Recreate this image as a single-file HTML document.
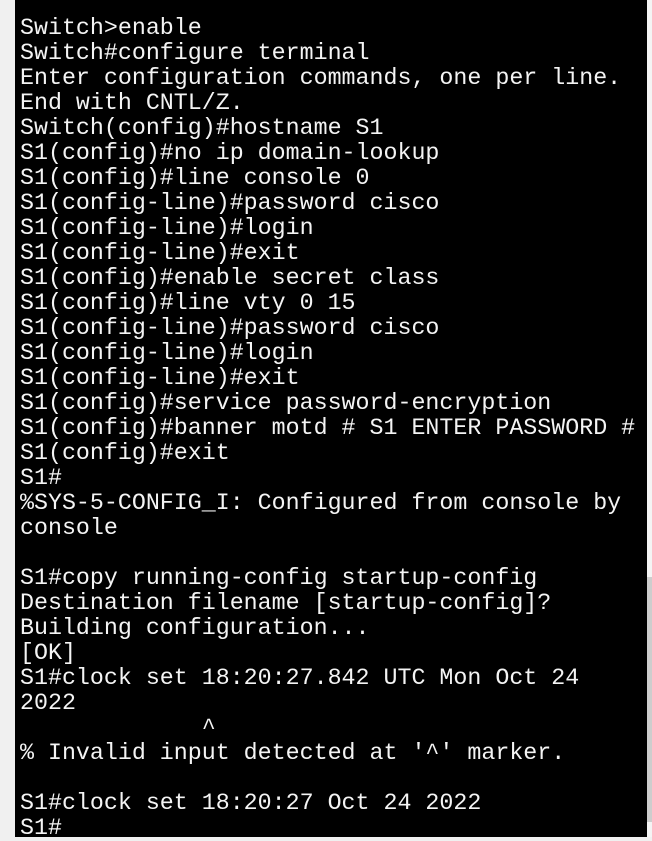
<!DOCTYPE html>
<html><head><style>
html,body{margin:0;padding:0;width:652px;height:837px;overflow:hidden;background:#f0f0f0;}
#t{position:absolute;left:15px;top:0;width:632px;height:837px;background:#000;}
#sb{position:absolute;left:647px;top:0;width:5px;height:837px;background:#f4f4f4;}
#sbt{position:absolute;left:647px;top:577px;width:5px;height:245px;background:#cdcdcd;}
pre{position:absolute;left:20px;top:16px;margin:0;font-family:"Courier New","Liberation Mono",monospace;font-size:23.3px;line-height:25px;color:#f4f4f4;}
</style></head><body>
<div id="t"></div><div id="sb"></div><div id="sbt"></div>
<pre>Switch&gt;enable
Switch#configure terminal
Enter configuration commands, one per line.
End with CNTL/Z.
Switch(config)#hostname S1
S1(config)#no ip domain-lookup
S1(config)#line console 0
S1(config-line)#password cisco
S1(config-line)#login
S1(config-line)#exit
S1(config)#enable secret class
S1(config)#line vty 0 15
S1(config-line)#password cisco
S1(config-line)#login
S1(config-line)#exit
S1(config)#service password-encryption
S1(config)#banner motd # S1 ENTER PASSWORD #
S1(config)#exit
S1#
%SYS-5-CONFIG_I: Configured from console by
console

S1#copy running-config startup-config
Destination filename [startup-config]?
Building configuration...
[OK]
S1#clock set 18:20:27.842 UTC Mon Oct 24
2022
             ^
% Invalid input detected at '^' marker.

S1#clock set 18:20:27 Oct 24 2022
S1#</pre>
</body></html>
